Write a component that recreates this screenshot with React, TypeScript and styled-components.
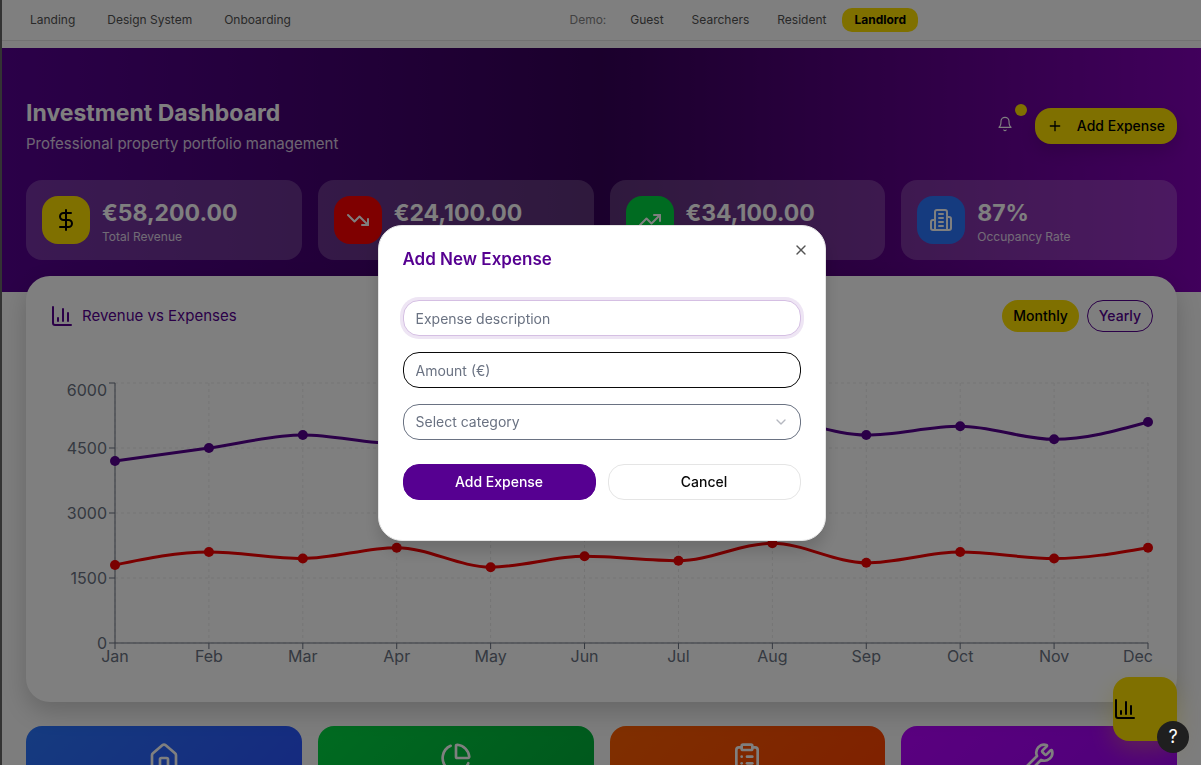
import React from "react";
import styled, { createGlobalStyle } from "styled-components";
import {
  BarChart3,
  ChevronDown,
  ClipboardList,
  DollarSign,
  House,
  PieChart,
  Plus,
  TrendingDown,
  TrendingUp,
  Wrench,
  X,
} from "lucide-react";

const purple = "#560091";
const yellow = "#ffe000";

const GlobalStyle = createGlobalStyle`
  *, *::before, *::after { box-sizing: border-box; }
  body {
    margin: 0;
    height: 100vh;
    overflow: hidden;
    background: #fafafa;
    color: #0a0a0a;
    font-family: Inter, "Liberation Sans", sans-serif;
    font-size: 15px;
    line-height: 24px;
  }
  h1, h2, p { margin: 0; }
  button, input, select { font: inherit; }
  button { cursor: pointer; }
`;

const Page = styled.div`
  height: 100vh;
  overflow: hidden;
  border-left: 2px solid #333;
`;

const NavBar = styled.nav`
  display: flex;
  justify-content: space-between;
  padding: 8px 283px 8px 16px;
  background: #fff;
  border-bottom: 1px solid #e5e5e5;
`;

const NavGroup = styled.div<{ $gap: number }>`
  display: flex;
  align-items: center;
  gap: ${(p) => p.$gap}px;
  font-size: 12px;
  line-height: 16px;
`;

const NavLink = styled.a<{ $active?: boolean }>`
  padding: 4px 12px;
  border-radius: 10px;
  color: ${(p) => (p.$active ? "#000" : "#525252")};
  background: ${(p) => (p.$active ? yellow : "transparent")};
  font-weight: ${(p) => (p.$active ? 700 : 400)};
  text-decoration: none;
`;

const DemoLabel = styled.span`
  color: #858585;
  margin-right: 8px;
`;

const Hero = styled.header`
  margin-top: 7px;
  padding: 48px 24px 32px;
  background: linear-gradient(90deg, #560091, #360059 50%, #8200b8);
  color: #fff;
`;

const HeroTop = styled.div`
  display: flex;
  justify-content: space-between;
  align-items: center;
  margin-bottom: 24px;
`;

const Title = styled.h1`
  font-size: 23px;
  line-height: 34px;
  font-weight: 700;
`;

const Subtitle = styled.p`
  margin-top: 2px;
  opacity: 0.8;
`;

const HeroActions = styled.div`
  display: flex;
  align-items: center;
  gap: 12px;
`;

const BellButton = styled.button`
  position: relative;
  display: flex;
  padding: 8px 10px 12px;
  border: 0;
  background: none;
  color: #fff;
`;

const BellDot = styled.span`
  position: absolute;
  top: -4px;
  right: -4px;
  width: 12px;
  height: 12px;
  border-radius: 50%;
  background: ${yellow};
`;

const AddButton = styled.button`
  display: flex;
  align-items: center;
  gap: 14px;
  height: 36px;
  padding: 0 12px;
  border: 0;
  border-radius: 16px;
  background: ${yellow};
  color: #000;
  font-size: 14px;
  line-height: 20px;
  font-weight: 500;
  box-shadow: 0 8px 16px rgba(0, 0, 0, 0.12);
`;

const Grid = styled.div`
  display: grid;
  grid-template-columns: repeat(4, 1fr);
  gap: 16px;
`;

const Stat = styled.div`
  display: flex;
  align-items: center;
  gap: 12px;
  height: 80px;
  padding: 16px;
  border-radius: 16px;
  background: rgba(255, 255, 255, 0.2);
`;

const StatIcon = styled.div<{ $bg: string; $fg: string }>`
  display: grid;
  place-items: center;
  flex: none;
  width: 48px;
  height: 48px;
  border-radius: 16px;
  background: ${(p) => p.$bg};
  color: ${(p) => p.$fg};
`;

const StatValue = styled.p`
  font-size: 23px;
  line-height: 34px;
  font-weight: 700;
`;

const StatLabel = styled.p`
  font-size: 12px;
  line-height: 14px;
  opacity: 0.8;
`;

const Main = styled.main`
  padding: 0 24px;
  margin-top: -16px;
`;

const ChartCard = styled.section`
  position: relative;
  padding: 24px 24px 40px;
  border-radius: 24px;
  background: #fff;
  box-shadow: 0 10px 24px rgba(0, 0, 0, 0.18);
`;

const ChartHead = styled.div`
  display: flex;
  align-items: center;
  justify-content: space-between;
  margin-bottom: 40px;
`;

const ChartTitle = styled.h2`
  display: flex;
  align-items: center;
  gap: 8px;
  font-size: 15px;
  line-height: 24px;
  font-weight: 400;
  color: ${purple};
`;

const Toggles = styled.div`
  display: flex;
  gap: 8px;
`;

const Toggle = styled.button<{ $active?: boolean }>`
  height: 32px;
  padding: 0 11px;
  border: ${(p) => (p.$active ? "0" : `1px solid ${purple}`)};
  border-radius: 16px;
  background: ${(p) => (p.$active ? yellow : "transparent")};
  color: ${(p) => (p.$active ? "#000" : purple)};
  font-size: 14px;
  line-height: 20px;
  font-weight: 500;
`;

const ChartSvg = styled.svg`
  display: block;
  width: 100%;
  height: auto;
  overflow: visible;
  font-size: 16px;
`;

const Tile = styled.a<{ $from: string; $to: string }>`
  display: flex;
  justify-content: center;
  height: 120px;
  padding-top: 16px;
  border-radius: 16px;
  background: linear-gradient(135deg, ${(p) => p.$from}, ${(p) => p.$to});
  color: #fff;
`;

const Tiles = styled(Grid)`
  margin-top: 24px;
`;

const FloatingChart = styled.button`
  position: fixed;
  right: 24px;
  bottom: 24px;
  display: flex;
  align-items: center;
  width: 64px;
  height: 64px;
  padding: 0;
  border: 0;
  border-radius: 16px;
  background: ${yellow};
  color: #000;
  box-shadow: 0 8px 24px rgba(255, 224, 0, 0.3);
`;

const Overlay = styled.div`
  position: fixed;
  inset: 0 0 0 2px;
  display: grid;
  place-items: center;
  background: rgba(0, 0, 0, 0.5);
`;

const Dialog = styled.div`
  position: relative;
  width: 448px;
  max-width: calc(100% - 32px);
  padding: 24px 24px 40px;
  border: 1px solid #e5e5e5;
  border-radius: 24px;
  background: #fff;
  box-shadow: 0 10px 16px rgba(0, 0, 0, 0.15);
`;

const DialogTitle = styled.h2`
  font-size: 17px;
  line-height: 18px;
  font-weight: 600;
  color: ${purple};
`;

const CloseButton = styled.button`
  position: absolute;
  top: 16px;
  right: 16px;
  display: flex;
  padding: 0;
  border: 0;
  background: none;
  color: #555;
`;

const Form = styled.form`
  display: flex;
  flex-direction: column;
  gap: 16px;
  margin-top: 32px;
`;

const Field = styled.input<{ $highlight?: boolean }>`
  width: 100%;
  height: 36px;
  padding: 6px 12px 4px;
  border: 1px solid ${(p) => (p.$highlight ? "#d5bfe3" : "#0a0a0a")};
  border-radius: 16px;
  outline: 0;
  background: #fff;
  font-size: 14px;
  line-height: 20px;
  box-shadow: ${(p) => (p.$highlight ? "0 0 0 3px #eee5f4" : "none")};
  &::placeholder {
    color: #6a7282;
    opacity: 1;
  }
`;

const SelectWrap = styled.div`
  position: relative;
  svg {
    position: absolute;
    right: 12px;
    top: 10px;
    color: #b5b8c0;
    pointer-events: none;
  }
`;

const Select = styled.select`
  display: block;
  width: 100%;
  height: 36px;
  padding: 0 12px;
  appearance: none;
  border: 1px solid #6a7282;
  border-radius: 16px;
  background: #fff;
  color: #6a7282;
  font-size: 14px;
  line-height: 20px;
`;

const Buttons = styled.div`
  display: flex;
  gap: 12px;
  margin-top: 8px;
`;

const FormButton = styled.button<{ $primary?: boolean }>`
  flex: 1;
  height: 36px;
  border: 1px solid ${(p) => (p.$primary ? purple : "#e5e5e5")};
  border-radius: 16px;
  background: ${(p) => (p.$primary ? purple : "#fff")};
  color: ${(p) => (p.$primary ? "#fff" : "#0a0a0a")};
  font-size: 14px;
  line-height: 20px;
  font-weight: 500;
`;

const HelpButton = styled.button`
  position: fixed;
  right: 12px;
  bottom: 12px;
  width: 32px;
  height: 32px;
  padding: 0;
  border: 0;
  border-radius: 50%;
  background: #1f1f1f;
  color: #fff;
  font-size: 18px;
  line-height: 32px;
`;

const BellIcon = () => (
  <svg width="16" height="16" viewBox="0 0 24 24" fill="none" stroke="currentColor" strokeWidth="1.75" strokeLinecap="round" strokeLinejoin="round">
    <path d="M6 8a6 6 0 0 1 12 0c0 7 3 9 3 9H3s3-2 3-9" />
    <path d="M10.3 21a1.94 1.94 0 0 0 3.4 0" />
  </svg>
);

const OfficeIcon = ({ size }: { size: number }) => (
  <svg width={size} height={size} viewBox="0 0 24 24" fill="none" stroke="currentColor" strokeWidth="2" strokeLinecap="round" strokeLinejoin="round">
    <path d="M6 22V4a2 2 0 0 1 2-2h8a2 2 0 0 1 2 2v18Z" />
    <path d="M6 12H4a2 2 0 0 0-2 2v6a2 2 0 0 0 2 2h2" />
    <path d="M18 9h2a2 2 0 0 1 2 2v9a2 2 0 0 1-2 2h-2" />
    <path d="M10 6h4M10 10h4M10 14h4M10 18h4" />
  </svg>
);

const months = ["Jan", "Feb", "Mar", "Apr", "May", "Jun", "Jul", "Aug", "Sep", "Oct", "Nov", "Dec"];
const revenue = [4200, 4500, 4800, 4600, 4900, 5100, 5300, 5200, 4800, 5000, 4700, 5100];
const expenses = [1800, 2100, 1950, 2200, 1750, 2000, 1900, 2300, 1850, 2100, 1950, 2200];

const plot = { left: 65, right: 1098, top: 11, bottom: 271 };
const xAt = (i: number) => plot.left + ((plot.right - plot.left) * i) / 11;
const yAt = (v: number) => plot.bottom - ((plot.bottom - plot.top) * v) / 6000;

// Monotone cubic interpolation through the monthly values.
function monotonePath(values: number[]) {
  const pts = values.map((v, i) => [xAt(i), yAt(v)]);
  const n = pts.length;
  const h = pts[1][0] - pts[0][0];
  const d = pts.slice(1).map((p, i) => (p[1] - pts[i][1]) / h);
  const m: number[] = new Array(n).fill(0);
  for (let i = 1; i < n - 1; i++) {
    const s = Math.sign(d[i - 1]) + Math.sign(d[i]);
    m[i] = s * Math.min(Math.abs(d[i - 1]), Math.abs(d[i]), Math.abs(d[i - 1] + d[i]) / 4);
  }
  m[0] = (3 * d[0] - m[1]) / 2;
  m[n - 1] = (3 * d[n - 2] - m[n - 2]) / 2;
  let path = `M${pts[0][0]},${pts[0][1]}`;
  for (let i = 0; i < n - 1; i++) {
    const [x0, y0] = pts[i];
    const [x1, y1] = pts[i + 1];
    path += `C${x0 + h / 3},${y0 + (m[i] * h) / 3} ${x1 - h / 3},${y1 - (m[i + 1] * h) / 3} ${x1},${y1}`;
  }
  return path;
}

function Series({ values, color }: { values: number[]; color: string }) {
  return (
    <g>
      <path d={monotonePath(values)} fill="none" stroke={color} strokeWidth={3} />
      {values.map((v, i) => (
        <circle key={i} cx={xAt(i)} cy={yAt(v)} r={5} fill={color} />
      ))}
    </g>
  );
}

function RevenueChart() {
  const ticks = [0, 1500, 3000, 4500, 6000];
  return (
    <ChartSvg viewBox="0 0 1103 290" role="img" aria-label="Monthly revenue and expenses">
      <g stroke="#e9e9e9" strokeDasharray="3 3">
        {ticks.map((t) => (
          <line key={t} x1={plot.left} x2={plot.right} y1={yAt(t)} y2={yAt(t)} />
        ))}
        {months.map((m, i) => (
          <line key={m} x1={xAt(i)} x2={xAt(i)} y1={plot.top} y2={plot.bottom} />
        ))}
      </g>
      <g stroke="#6a7282">
        <line x1={plot.left} x2={plot.right} y1={plot.bottom} y2={plot.bottom} />
        <line x1={plot.left} x2={plot.left} y1={plot.top} y2={plot.bottom} />
        {ticks.map((t) => (
          <line key={t} x1={plot.left - 6} x2={plot.left} y1={yAt(t)} y2={yAt(t)} />
        ))}
        {months.map((m, i) => (
          <line key={m} x1={xAt(i)} x2={xAt(i)} y1={plot.bottom} y2={plot.bottom + 6} />
        ))}
      </g>
      <g fill="#6a7282">
        {ticks.map((t) => (
          <text key={t} x={plot.left - 8} y={t === 6000 ? 24 : yAt(t) + 6} textAnchor="end">
            {t}
          </text>
        ))}
        {months.map((m, i) => (
          <text key={m} x={i === 11 ? 1103 : xAt(i)} y={plot.bottom + 19} textAnchor={i === 11 ? "end" : "middle"}>
            {m}
          </text>
        ))}
      </g>
      <Series values={revenue} color={purple} />
      <Series values={expenses} color="#f50000" />
    </ChartSvg>
  );
}

const stats = [
  { value: "€58,200.00", label: "Total Revenue", bg: yellow, fg: "#000", Icon: DollarSign },
  { value: "€24,100.00", label: "Total Expenses", bg: "#ff0000", fg: "#fff", Icon: TrendingDown },
  { value: "€34,100.00", label: "Net Income", bg: "#00d642", fg: "#fff", Icon: TrendingUp },
  { value: "87%", label: "Occupancy Rate", bg: "#2a76ff", fg: "#fff", Icon: OfficeIcon },
];

const tiles = [
  { name: "Properties", from: "#2a76ff", to: "#2a4cff", Icon: House },
  { name: "Reports", from: "#00d642", to: "#00a838", Icon: PieChart },
  { name: "Tasks", from: "#ff5f00", to: "#ff3c00", Icon: ClipboardList },
  { name: "Maintenance", from: "#b400ff", to: "#9800f0", Icon: Wrench },
];

export default function App() {
  return (
    <>
      <GlobalStyle />
      <Page>
        <NavBar>
          <NavGroup $gap={8}>
            {["Landing", "Design System", "Onboarding"].map((t) => (
              <NavLink key={t} href="#">{t}</NavLink>
            ))}
          </NavGroup>
          <NavGroup $gap={4}>
            <DemoLabel>Demo:</DemoLabel>
            {["Guest", "Searchers", "Resident", "Landlord"].map((t) => (
              <NavLink key={t} href="#" $active={t === "Landlord"}>{t}</NavLink>
            ))}
          </NavGroup>
        </NavBar>
        <Hero>
          <HeroTop>
            <div>
              <Title>Investment Dashboard</Title>
              <Subtitle>Professional property portfolio management</Subtitle>
            </div>
            <HeroActions>
              <BellButton aria-label="Notifications">
                <BellIcon />
                <BellDot />
              </BellButton>
              <AddButton>
                <Plus size={16} />
                Add Expense
              </AddButton>
            </HeroActions>
          </HeroTop>
          <Grid>
            {stats.map(({ value, label, bg, fg, Icon }) => (
              <Stat key={label}>
                <StatIcon $bg={bg} $fg={fg}>
                  <Icon size={24} />
                </StatIcon>
                <div>
                  <StatValue>{value}</StatValue>
                  <StatLabel>{label}</StatLabel>
                </div>
              </Stat>
            ))}
          </Grid>
        </Hero>
        <Main>
          <ChartCard>
            <ChartHead>
              <ChartTitle>
                <BarChart3 size={24} />
                Revenue vs Expenses
              </ChartTitle>
              <Toggles>
                <Toggle $active>Monthly</Toggle>
                <Toggle>Yearly</Toggle>
              </Toggles>
            </ChartHead>
            <RevenueChart />
          </ChartCard>
          <Tiles>
            {tiles.map(({ name, from, to, Icon }) => (
              <Tile key={name} href="#" aria-label={name} $from={from} $to={to}>
                <Icon size={32} />
              </Tile>
            ))}
          </Tiles>
        </Main>
      </Page>
      <FloatingChart aria-label="Open analytics">
        <BarChart3 size={24} />
      </FloatingChart>
      <Overlay>
        <Dialog role="dialog" aria-modal="true" aria-labelledby="expense-title">
          <DialogTitle id="expense-title">Add New Expense</DialogTitle>
          <CloseButton aria-label="Close">
            <X size={16} />
          </CloseButton>
          <Form onSubmit={(e) => e.preventDefault()}>
            <Field $highlight aria-label="Expense description" placeholder="Expense description" />
            <Field aria-label="Amount (€)" placeholder="Amount (€)" />
            <SelectWrap>
              <Select aria-label="Category" defaultValue="">
                <option value="">Select category</option>
                <option value="maintenance">Maintenance</option>
                <option value="utilities">Utilities</option>
              </Select>
              <ChevronDown size={16} />
            </SelectWrap>
            <Buttons>
              <FormButton type="submit" $primary>Add Expense</FormButton>
              <FormButton type="button">Cancel</FormButton>
            </Buttons>
          </Form>
        </Dialog>
      </Overlay>
      <HelpButton aria-label="Help">?</HelpButton>
    </>
  );
}
